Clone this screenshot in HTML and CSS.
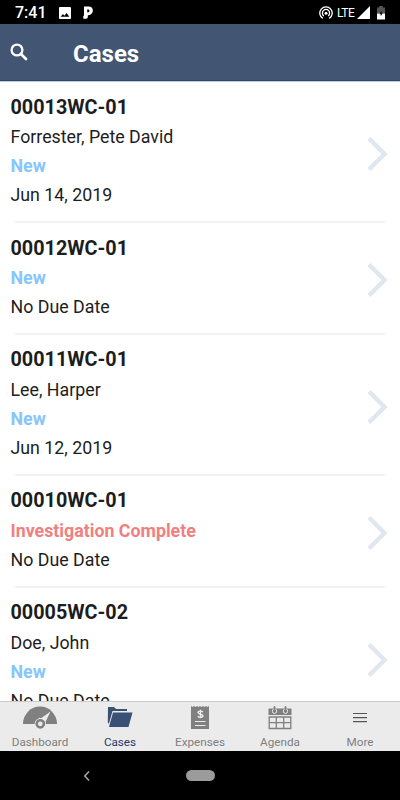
FILE: index.html
```
<!DOCTYPE html>
<html lang="en">
<head>
<meta charset="utf-8">
<title>Cases</title>
<link rel="stylesheet" href="styles.css">
</head>
<body>
<div class="status">
  <span class="clock">7:41</span>
  <svg class="photo" width="12" height="12" viewBox="0 0 12 12"><path fill="#fff" fill-rule="evenodd" d="M1 0h10q1 0 1 1v10q0 1-1 1H1q-1 0-1-1V1q0-1 1-1zM1.700 9.700h8.600L7.600 6 5.400 8.800 3.900 7z"/></svg>
  <svg class="pandora" width="10" height="13" viewBox="0 0 10 13"><path fill="#fff" fill-rule="evenodd" d="M1 .5h4.500C8.300.5 9.800 2 9.800 4.500S8 9.200 5.300 9.200H4.800V11q0 1.700-1.600 1.700H.3V9.800H1zM4.200 3.500v2.700h1C6 6.200 6.400 5.600 6.400 4.900S6 3.500 5.200 3.500z"/></svg>
  <svg class="hotspot" width="14" height="14" viewBox="0 0 14 14" fill="none" stroke="#fff" stroke-width="1.300"><path d="M3.800 12.400a6.200 6.200 0 1 1 6.400 0M4.800 9.900a3.600 3.600 0 1 1 4.400 0"/><circle cx="7" cy="7.200" r="1.500" fill="#fff" stroke="none"/></svg>
  <span class="lte">LTE</span>
  <svg class="signal" width="13" height="13" viewBox="0 0 13 13"><path fill="#fff" d="M13 0v13H0z"/></svg>
  <svg class="battery" width="8" height="14" viewBox="0 0 8 14"><path fill="#555" d="M2.200 0h3.600v1.500H8V7.500H0v-6h2.200z"/><path fill="#fff" d="M0 7.500h8v6H0z"/><path fill="#000" d="M4.600 4.300v3H5.600L3.800 10.300V8.300H2.600z"/></svg>
</div>
<header class="header">
  <svg class="search" width="18" height="18" viewBox="0 0 18 18" fill="none" stroke="#fff"><circle cx="7" cy="7" r="5.400" stroke-width="2.300"/><path d="M11 11l5 5" stroke-width="2.700" stroke-linecap="round"/></svg>
  <h1>Cases</h1>
</header>
<main class="list">
  <article class="case">
    <div class="info"><h2>00013WC-01</h2><p>Forrester, Pete David</p><p class="new">New</p><p>Jun 14, 2019</p></div>
    <svg class="chevron" width="22" height="36" viewBox="0 0 22 36"><path d="M2 2.500l15.500 15.500L2 33.500"/></svg>
  </article>
  <article class="case">
    <div class="info"><h2>00012WC-01</h2><p class="new">New</p><p>No Due Date</p></div>
    <svg class="chevron" width="22" height="36" viewBox="0 0 22 36"><path d="M2 2.500l15.500 15.500L2 33.500"/></svg>
  </article>
  <article class="case">
    <div class="info"><h2>00011WC-01</h2><p>Lee, Harper</p><p class="new">New</p><p>Jun 12, 2019</p></div>
    <svg class="chevron" width="22" height="36" viewBox="0 0 22 36"><path d="M2 2.500l15.500 15.500L2 33.500"/></svg>
  </article>
  <article class="case">
    <div class="info"><h2>00010WC-01</h2><p class="done">Investigation Complete</p><p>No Due Date</p></div>
    <svg class="chevron" width="22" height="36" viewBox="0 0 22 36"><path d="M2 2.500l15.500 15.500L2 33.500"/></svg>
  </article>
  <article class="case">
    <div class="info"><h2>00005WC-02</h2><p>Doe, John</p><p class="new">New</p><p>No Due Date</p></div>
    <svg class="chevron" width="22" height="36" viewBox="0 0 22 36"><path d="M2 2.500l15.500 15.500L2 33.500"/></svg>
  </article>
</main>
<nav class="tabs">
  <a class="tab"><svg width="34" height="24" viewBox="0 0 34 24"><path fill="#808080" d="M0 18a17 17.500 0 0 1 34 0z"/><path fill="#ebebeb" d="M27.500 5.500L22 17l-5-4z"/><path fill="#ebebeb" d="M16 11.500l6 4-2 3-5-3z"/><circle cx="17.300" cy="17.800" r="5.600" fill="#ebebeb"/><circle cx="17.300" cy="17.800" r="3.600" fill="#ebebeb" stroke="#808080" stroke-width="2.500"/></svg><span>Dashboard</span></a>
  <a class="tab active"><svg width="26" height="24" viewBox="0 0 26 24"><path fill="#3a5175" d="M1 1h6l2 2h11v2H5.500L2 17.500Q.8 17.500.8 16z"/><path fill="#3a5175" d="M6 6.500H25.500L21.500 21H2z"/></svg><span>Cases</span></a>
  <a class="tab"><svg width="18" height="24" viewBox="0 0 18 24"><path fill="#808080" d="M0 0l1.500 1L3 0l1.500 1L6 0l1.500 1L9 0l1.500 1L12 0l1.500 1L15 0l1.500 1L18 0v23H0z"/><path stroke="#ebebeb" stroke-width="1.100" d="M4 15.500h10.500M4 19.500h10.500"/><path fill="none" stroke="#ebebeb" stroke-width="1.400" d="M11.800 6.200C11 4.700 7 4.700 7 6.600c0 2 5 1.200 5 3.200 0 1.900-4.200 2-5.200.3M9.500 3.800v8.400"/></svg><span>Expenses</span></a>
  <a class="tab"><svg width="24" height="24" viewBox="0 0 24 24"><path fill="#808080" d="M1.500 2.500h21q1 0 1 1V9H.5V3.500q0-1 1-1z"/><g fill="none" stroke="#808080" stroke-width="1.300"><path d="M1.200 11h21.600v11.500H1.200zM1.200 16.700h21.600M8.300 11v11.500M15.700 11v11.500"/></g><g fill="#808080" stroke="#ebebeb"><circle cx="6.500" cy="5.200" r="2.200"/><circle cx="17.500" cy="5.200" r="2.200"/></g><path stroke="#808080" stroke-width="1.800" stroke-linecap="round" d="M6.500 1v4M17.500 1v4"/></svg><span>Agenda</span></a>
  <a class="tab"><svg width="16" height="24" viewBox="0 0 16 24"><path stroke="#555" stroke-width="1.200" d="M1 7.500h14M1 11.600h14M1 15.700h14"/></svg><span>More</span></a>
</nav>
<div class="system">
  <svg class="back" width="8" height="12" viewBox="0 0 8 12"><path fill="none" stroke="#aaa" stroke-width="1.500" d="M6 1.500L1.800 6 6 10.500"/></svg>
  <div class="pill"></div>
</div>
</body>
</html>
```
FILE: styles.css
```
* { box-sizing: border-box; }
body {
  margin: 0;
  width: 400px;
  height: 800px;
  display: flex;
  flex-direction: column;
  overflow: hidden;
  background: #fff;
  color: #1d1d1d;
  font-family: Roboto, sans-serif;
}
h1, h2, p { margin: 0; }
svg { display: block; flex: none; }
.status {
  flex: none;
  height: 24px;
  padding: 1px 15px 0;
  display: flex;
  align-items: center;
  background: #000;
  color: #fff;
}
.clock { width: 44px; font-size: 16px; font-weight: 500; line-height: 24px; }
.pandora { margin-left: 12px; }
.hotspot { margin-left: auto; }
.lte { margin: 0 2px 0 4px; width: 18px; font-size: 12px; letter-spacing: -0.5px; }
.battery { margin-left: 7px; }
.header {
  flex: none;
  height: 57px;
  display: flex;
  align-items: center;
  padding: 0 10px;
  background: #425572;
  border-bottom: 1px solid #2d4a70;
  color: #fff;
}
.search { margin-top: -1px; }
.header h1 { margin: 4px 0 0 45px; font-size: 24px; font-weight: 700; line-height: 30px; }
.list { flex: 1; min-height: 0; overflow: hidden; border-top: 1px solid #c3cad3; }
.case {
  display: flex;
  align-items: center;
  justify-content: space-between;
  padding: 10.500px 11px 13.400px 10.500px;
  background: linear-gradient(#f2f2f2, #f2f2f2) 15px 100% / 370px 2px no-repeat;
}
.case h2 { font-size: 19.800px; font-weight: 700; line-height: 29.400px; }
.case p { font-size: 17.800px; line-height: 29.250px; }
.case .new { color: #87c5fc; font-weight: 700; }
.case .done { color: #f08080; font-weight: 700; }
.chevron { margin: 5.500px 0 0; fill: none; stroke: #e0e7ef; stroke-width: 4.500; }
.tabs {
  flex: none;
  height: 50px;
  display: flex;
  background: #ebebeb;
  border-top: 1px solid #ccc;
}
.tab {
  flex: 1;
  display: flex;
  flex-direction: column;
  align-items: center;
  padding-top: 4px;
  color: #808080;
  font-size: 11.700px;
  line-height: 14px;
}
.tab span { margin-top: 5px; }
.tab.active { color: #1f3a6b; }
.system {
  flex: none;
  height: 49px;
  display: flex;
  align-items: center;
  padding-left: 83px;
  background: #000;
}
.pill { margin-left: 95px; width: 29px; height: 11px; border-radius: 6px; background: #9b9b9b; }
```
